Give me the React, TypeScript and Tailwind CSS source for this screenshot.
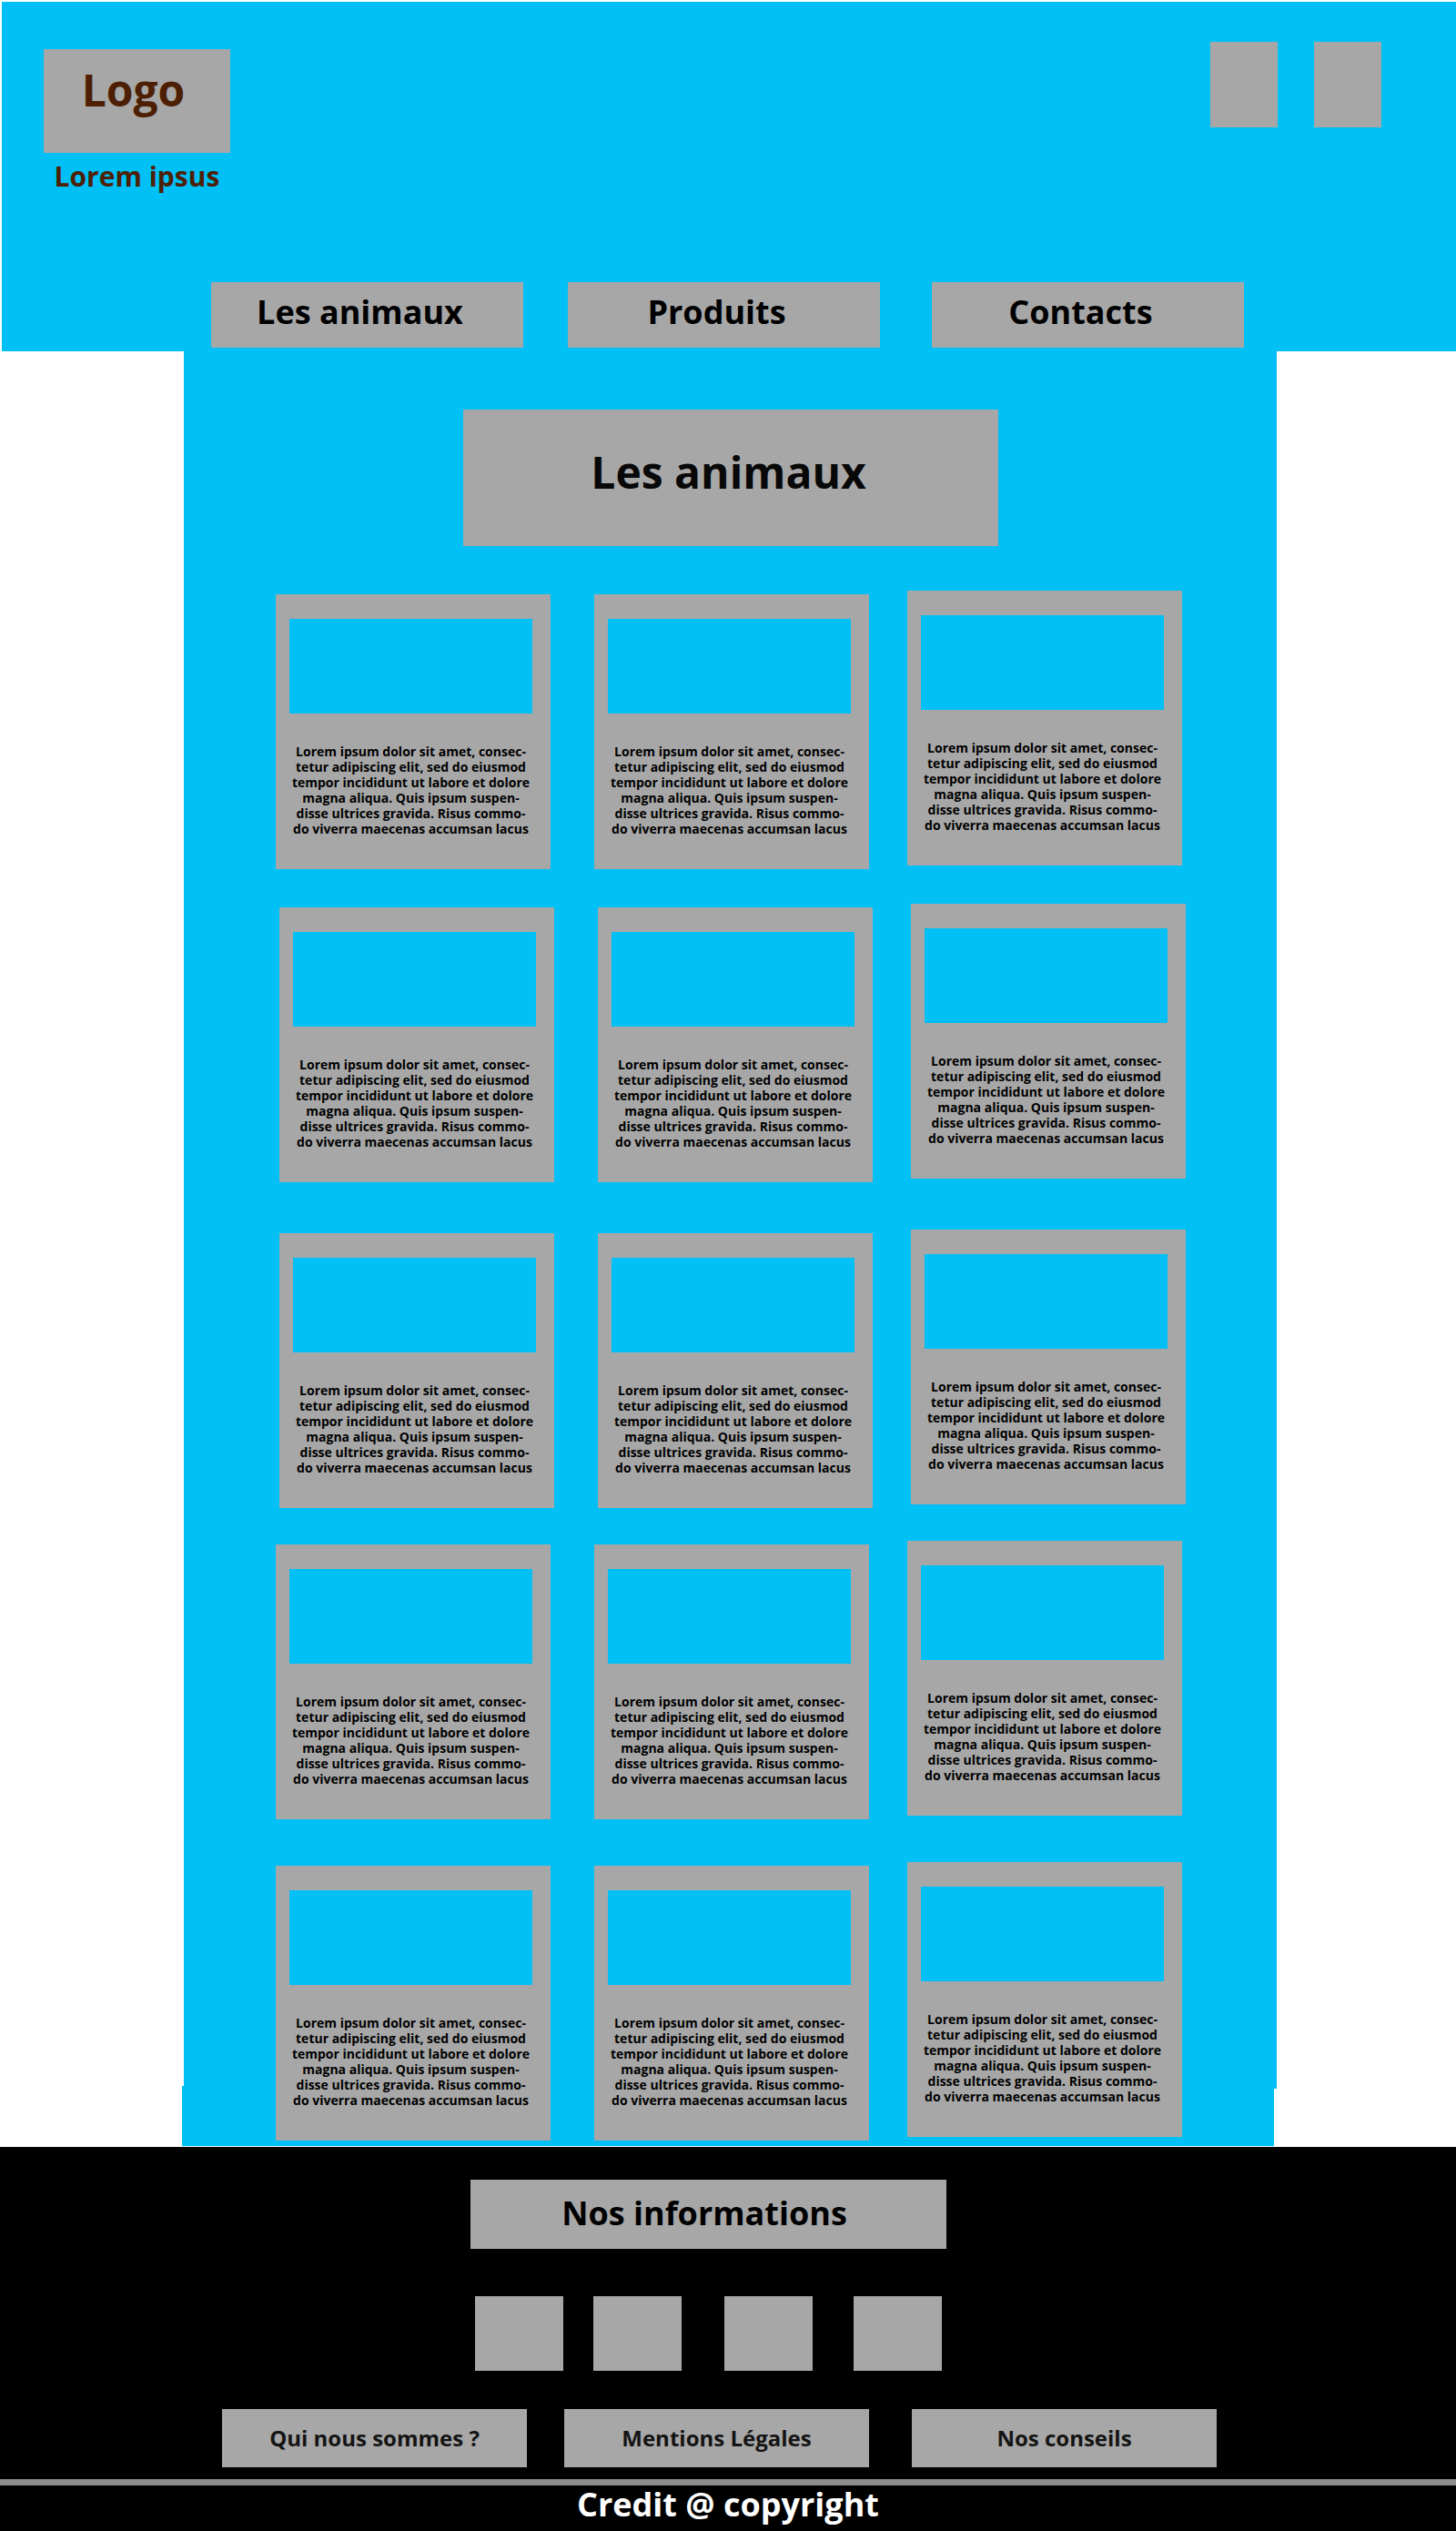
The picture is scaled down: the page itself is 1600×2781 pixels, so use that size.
const NAV = ['Les animaux', 'Produits', 'Contacts'];
const FOOTER_LINKS = ['Qui nous sommes ?', 'Mentions Légales', 'Nos conseils'];

const CARD_LINES = [
  'Lorem ipsum dolor sit amet, consec-',
  'tetur adipiscing elit, sed do eiusmod',
  'tempor incididunt ut labore et dolore',
  'magna aliqua. Quis ipsum suspen-',
  'disse ultrices gravida. Risus commo-',
  'do viverra maecenas accumsan lacus',
];

// Spacing and side padding of each row of animal cards.
const ROWS = [
  'mt-[49px] pl-[101px] pr-[104px]',
  'mt-[38px] pl-[105px] pr-[100px]',
  'mt-[52px] pl-[105px] pr-[100px]',
  'mt-9 pl-[101px] pr-[104px]',
  'mt-[47px] pl-[101px] pr-[104px]',
];

function NavLink({ label }: { label: string }) {
  return (
    <a href="#" className="flex h-[72px] items-center justify-center bg-[#a7a7a7] pr-4 pb-1.5 text-4xl text-black">
      {label}
    </a>
  );
}

function FooterLink({ label }: { label: string }) {
  return (
    <a href="#" className="flex h-16 items-center justify-center bg-[#a7a7a7] text-2xl text-[#141414]">
      {label}
    </a>
  );
}

function Card() {
  return (
    <article className="min-h-[302px] bg-[#a7a7a7] pt-[27px] pr-5 pl-[15px]">
      <div className="h-[104px] bg-[#00c0f6]" />
      <p className="mt-[33px] text-center text-sm leading-[17px] whitespace-nowrap text-black">
        {CARD_LINES.map((line) => (
          <span key={line} className="block">
            {line}
          </span>
        ))}
      </p>
    </article>
  );
}

function SocialButton({ label }: { label: string }) {
  return <button type="button" aria-label={label} className="h-[82px] w-[97px] bg-[#a7a7a7]" />;
}

export default function App() {
  return (
    <div className="flow-root bg-white font-['Open_Sans',sans-serif] font-bold">
      <header className="mt-0.5 ml-0.5 bg-[#00c0f6] pt-11 pb-1">
        <div className="flex items-start justify-between pr-[82px] pl-[46px]">
          <div className="pt-2 text-[#4d1f05]">
            <a href="#" className="flex h-[114px] w-[205px] items-center justify-center bg-[#a7a7a7] pr-2 pb-6 text-5xl">
              Logo
            </a>
            <p className="mt-1.5 text-center text-3xl leading-10">Lorem ipsus</p>
          </div>
          <div className="flex gap-10">
            <button type="button" aria-label="Recherche" className="h-[94px] w-[74px] bg-[#a7a7a7]" />
            <button type="button" aria-label="Compte" className="h-[94px] w-[74px] bg-[#a7a7a7]" />
          </div>
        </div>
        <nav className="mt-24 grid grid-cols-[735fr_343fr] gap-[57px] pr-[233px] pl-[230px]">
          <div className="grid grid-cols-2 gap-[49px]">
            <NavLink label={NAV[0]} />
            <NavLink label={NAV[1]} />
          </div>
          <NavLink label={NAV[2]} />
        </nav>
      </header>

      <main className="relative isolate mr-[197px] mb-px ml-[202px] pt-16 pb-1.5">
        <div className="absolute inset-x-0 top-0 bottom-[63px] -z-10 bg-[#00c0f6]" />
        <div className="absolute right-[3px] bottom-0 -left-0.5 -z-10 h-[66px] bg-[#00c0f6]" />
        <h1 className="mx-auto flex h-[150px] max-w-[588px] items-center justify-center bg-[#a7a7a7] pr-1 pb-3 text-5xl text-[#080808]">
          Les animaux
        </h1>
        {ROWS.map((row, i) => (
          <section key={i} className={`grid grid-cols-[652fr_302fr] items-start gap-[42px] ${row}`}>
            <div className="grid grid-cols-2 gap-12 pt-1">
              <Card />
              <Card />
            </div>
            <Card />
          </section>
        ))}
      </main>

      <footer className="bg-black pt-9">
        <div className="flex flex-col items-center pr-11">
          <h2 className="flex h-[76px] w-[523px] items-center justify-center bg-[#a7a7a7] pr-2 pb-0.5 text-4xl text-black">
            Nos informations
          </h2>
          <div className="mt-[52px] flex gap-[47px]">
            <div className="flex gap-[33px]">
              <SocialButton label="Réseau 1" />
              <SocialButton label="Réseau 2" />
            </div>
            <div className="flex gap-[45px]">
              <SocialButton label="Réseau 3" />
              <SocialButton label="Réseau 4" />
            </div>
          </div>
        </div>
        <nav className="mt-[42px] grid grid-cols-[711fr_335fr] gap-[47px] pr-[263px] pl-[244px]">
          <div className="grid grid-cols-2 gap-[41px]">
            <FooterLink label={FOOTER_LINKS[0]} />
            <FooterLink label={FOOTER_LINKS[1]} />
          </div>
          <FooterLink label={FOOTER_LINKS[2]} />
        </nav>
        <hr className="mt-[13px] h-[7px] border-0 bg-[#8c8c8c]" />
        <p className="pb-2 text-center text-4xl leading-[42px] text-white">Credit @ copyright</p>
      </footer>
    </div>
  );
}
